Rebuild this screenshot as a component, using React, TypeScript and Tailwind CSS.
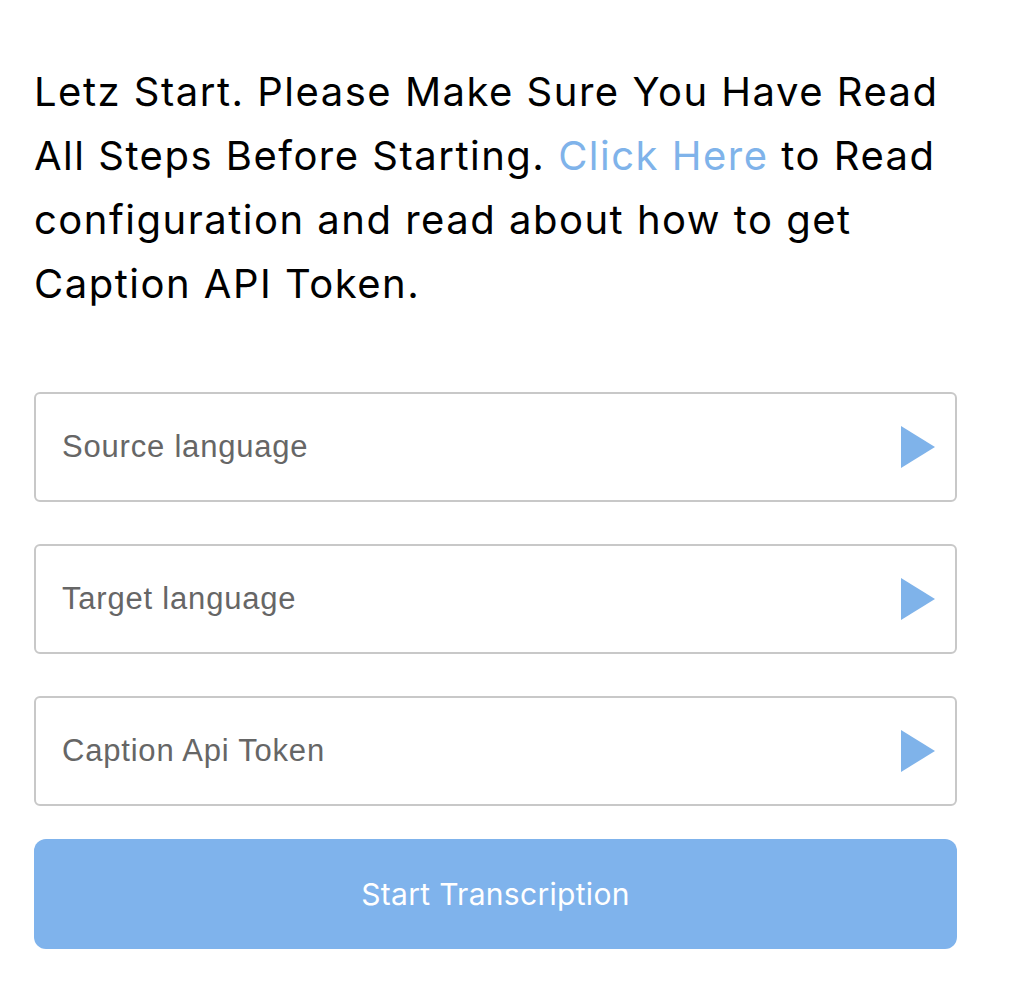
export default function App() {
  const fields = ["Source language", "Target language", "Caption Api Token"];
  return (
    <div className="min-h-screen bg-white px-[34px] pt-[60px]" style={{ fontFamily: "Inter, sans-serif" }}>
      <p className="text-[40px] leading-[64px] text-black tracking-[1.5px]">
        Letz Start. Please Make Sure You Have Read All Steps Before Starting.{" "}
        <a className="text-[#7fb3ea]">Click Here</a> to Read configuration and read about how to get Caption API Token.
      </p>
      <div className="mt-[76px] w-[923px] flex flex-col gap-[42px]">
        {fields.map((f) => (
          <div
            key={f}
            className="h-[110px] rounded-[6px] border-2 border-[#c8c8c8] flex items-center justify-between pl-[26px] pr-[20px]"
          >
            <span
              className="text-[31px] text-[#666666] tracking-[0.8px]"
              style={{ fontFamily: '"Liberation Sans", Arial, sans-serif' }}
            >
              {f}
            </span>
            <svg width="34" height="42" viewBox="0 0 34 42">
              <polygon points="0,0 34,21 0,42" fill="#7fb3ea" />
            </svg>
          </div>
        ))}
      </div>
      <button className="mt-[33px] w-[923px] h-[110px] rounded-[12px] bg-[#7fb3ec] text-white text-[30px] tracking-[0.3px]">
        Start Transcription
      </button>
    </div>
  );
}
